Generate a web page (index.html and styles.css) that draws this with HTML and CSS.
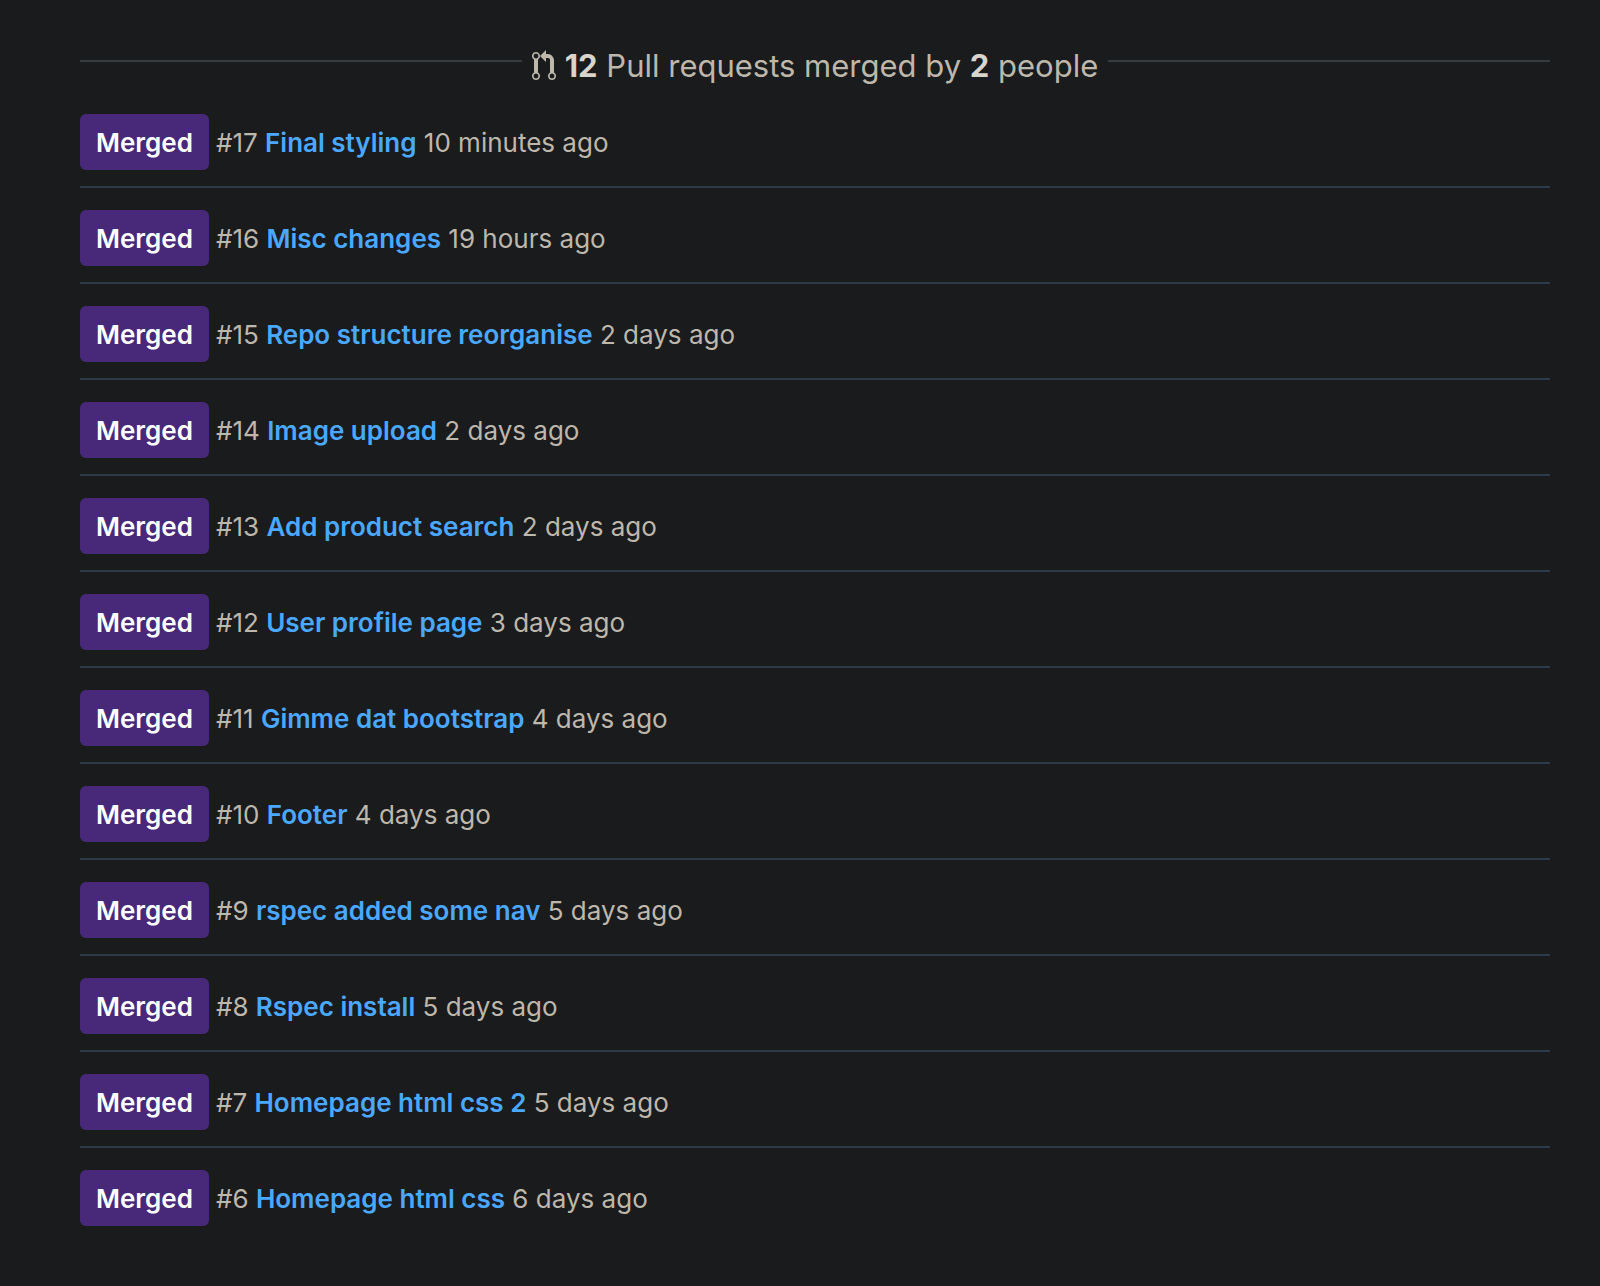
FILE: index.html
```html
<!DOCTYPE html>
<html lang="en">
<head>
<meta charset="utf-8">
<title>Merged pull requests</title>
<link rel="stylesheet" href="styles.css">
</head>
<body>
<main class="activity">
  <header class="activity-header">
    <h1 class="activity-title">
      <svg class="icon" viewBox="0 0 12 16" aria-hidden="true"><path fill-rule="evenodd" d="M11 11.28V5c-.03-.78-.34-1.47-.94-2.06C9.46 2.35 8.78 2.03 8 2H7V0L4 3l3 3V4h1c.27.02.48.11.69.31.21.2.3.42.31.69v6.28A1.993 1.993 0 0 0 10 15a1.993 1.993 0 0 0 1-3.72zm-1 2.92c-.66 0-1.2-.55-1.2-1.2 0-.65.55-1.2 1.2-1.2.65 0 1.2.55 1.2 1.2 0 .65-.55 1.2-1.2 1.2zM4 3c0-1.11-.89-2-2-2a1.993 1.993 0 0 0-1 3.72v6.56A1.993 1.993 0 0 0 2 15a1.993 1.993 0 0 0 1-3.72V4.72c.59-.34 1-.98 1-1.72zm-.8 10c0 .66-.55 1.2-1.2 1.2-.65 0-1.2-.55-1.2-1.2 0-.65.55-1.2 1.2-1.2.65 0 1.2.55 1.2 1.2zM2 4.2C1.34 4.2.8 3.65.8 3c0-.65.55-1.2 1.2-1.2.65 0 1.2.55 1.2 1.2 0 .65-.55 1.2-1.2 1.2z"/></svg>
      <span><strong>12</strong> Pull requests merged by <strong>2</strong> people</span>
    </h1>
  </header>
  <ul class="pulls">
    <li class="pull"><span class="badge">Merged</span><p class="pull-text">#17 <a href="#17">Final styling</a> 10 minutes ago</p></li>
    <li class="pull"><span class="badge">Merged</span><p class="pull-text">#16 <a href="#16">Misc changes</a> 19 hours ago</p></li>
    <li class="pull"><span class="badge">Merged</span><p class="pull-text">#15 <a href="#15">Repo structure reorganise</a> 2 days ago</p></li>
    <li class="pull"><span class="badge">Merged</span><p class="pull-text">#14 <a href="#14">Image upload</a> 2 days ago</p></li>
    <li class="pull"><span class="badge">Merged</span><p class="pull-text">#13 <a href="#13">Add product search</a> 2 days ago</p></li>
    <li class="pull"><span class="badge">Merged</span><p class="pull-text">#12 <a href="#12">User profile page</a> 3 days ago</p></li>
    <li class="pull"><span class="badge">Merged</span><p class="pull-text">#11 <a href="#11">Gimme dat bootstrap</a> 4 days ago</p></li>
    <li class="pull"><span class="badge">Merged</span><p class="pull-text">#10 <a href="#10">Footer</a> 4 days ago</p></li>
    <li class="pull"><span class="badge">Merged</span><p class="pull-text">#9 <a href="#9">rspec added some nav</a> 5 days ago</p></li>
    <li class="pull"><span class="badge">Merged</span><p class="pull-text">#8 <a href="#8">Rspec install</a> 5 days ago</p></li>
    <li class="pull"><span class="badge">Merged</span><p class="pull-text">#7 <a href="#7">Homepage html css 2</a> 5 days ago</p></li>
    <li class="pull"><span class="badge">Merged</span><p class="pull-text">#6 <a href="#6">Homepage html css</a> 6 days ago</p></li>
  </ul>
</main>
</body>
</html>
```
FILE: styles.css
```css
* {
  box-sizing: border-box;
}

body {
  margin: 0;
  background: #1a1b1c;
  color: #bdb7ac;
  font-family: Inter, "Liberation Sans", sans-serif;
  font-size: 26px;
  line-height: 40px;
}

.activity {
  padding: 46px 50px 60px 80px;
}

.activity-header {
  display: flex;
  align-items: center;
  gap: 10px;
}

/* Rules on both sides of the title, slightly above its middle */
.activity-header::before,
.activity-header::after {
  content: "";
  flex: 1;
  height: 10px;
  border-top: 2px solid #343b41;
}

.activity-title {
  display: flex;
  align-items: center;
  gap: 9px;
  margin: 0;
  font-size: 31px;
  font-weight: 400;
}

.activity-title strong {
  color: #d8d5cf;
  font-weight: 700;
}

.icon {
  width: 24px;
  height: 32px;
  fill: currentColor;
}

.pulls {
  margin: 6px 0 0;
  padding: 0;
  list-style: none;
}

.pull {
  display: flex;
  align-items: baseline;
  gap: 7px;
  padding: 22px 0 16px;
}

.pull + .pull {
  border-top: 2px solid #2b3a48;
}

.badge {
  padding: 9px 16px 7px;
  border-radius: 6px;
  background: #482979;
  color: #fff;
  font-weight: 600;
}

.pull-text {
  margin: 0;
}

.pull a {
  color: #4aa8ff;
  font-weight: 600;
  text-decoration: none;
}
```
